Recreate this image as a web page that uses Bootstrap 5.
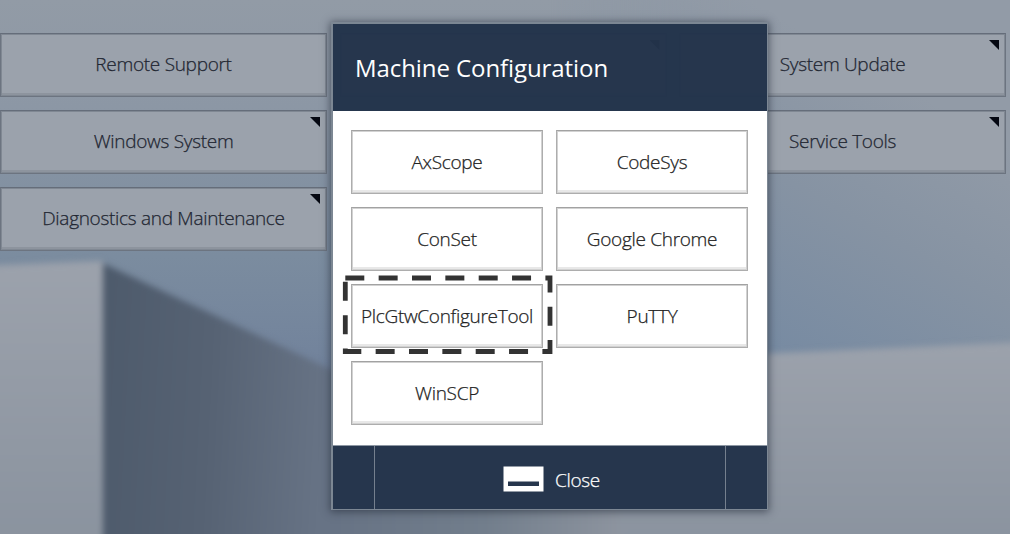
<!DOCTYPE html>
<html lang="en">
<head>
<meta charset="utf-8">
<meta name="viewport" content="width=device-width, initial-scale=1">
<title>Machine Configuration</title>
<link href="https://cdn.jsdelivr.net/npm/bootstrap@5.3.0/dist/css/bootstrap.min.css" rel="stylesheet">
<style>
body{font-family:"Open Sans","Noto Sans",sans-serif;background:#8b98a6;height:534px;width:1010px}
.backdrop-art{inset:0;width:1010px;height:534px}
.page-grid{display:grid;grid-template-columns:327px 327px 327px;grid-auto-rows:64px;gap:13px 12.5px;padding-top:33px}
.tile,.tool{border-radius:0;padding:0;height:64px;font-size:19px;line-height:28px;font-weight:300;-webkit-text-stroke:.25px;letter-spacing:-.3px;white-space:nowrap;display:flex;align-items:center;justify-content:center}
.tile{background:#9ba2ac;border:1px solid #6c7480;border-top-color:#656d7a;box-shadow:inset 0 0 0 1px #808893,inset 0 -3px #8d949e;color:#1f2632;position:relative;padding-bottom:2px}
.corner::after{content:"";position:absolute;right:6px;top:6px;width:10px;height:10px;background:#050812;clip-path:polygon(0 0,100% 0,100% 100%)}
.dialog-box{left:331px;top:22px;width:437px;height:488px;border:2px solid #7c8793;border-right-width:1px;box-shadow:0 1px 8px 1px rgba(40,48,62,.65)}
.dialog-head{height:87px;background:rgba(35,51,75,.975);color:#fff;font-size:24px;font-weight:400;padding:0 0 0 22px;letter-spacing:-.08px}
.dialog-main{height:334px;padding:19px 18px 0 17.5px}
.tool-grid{display:grid;grid-template-columns:192px 192px;gap:13px 13px;margin-left:.5px}
.tool{background:#fff;border:1px solid #adadad;border-top-color:#a2a2a2;box-shadow:inset 0 0 0 1px #d2d2d2,inset 0 -3px #e8e8e8;color:#222;position:relative}
.dashes{left:-11px;top:-12.5px;width:214px;height:84px}
.dialog-foot{height:64px;background:#26364d;border-top:1px solid #8d97a3;display:grid;grid-template-columns:41px 352px 1fr}
.close-btn{border:solid #75808e;border-width:0 1px;color:#fff;font-size:19px;font-weight:300;-webkit-text-stroke:.25px;padding:5px 0 0 3px;background:none;letter-spacing:-.3px}
.close-btn svg{margin-bottom:3px}
</style>
</head>
<body class="position-relative overflow-hidden m-0">
<svg class="backdrop-art position-absolute" viewBox="0 0 1010 534" preserveAspectRatio="none" aria-hidden="true">
  <defs>
    <linearGradient id="sky" x1="0" y1="0" x2="0" y2="1"><stop offset="0" stop-color="#929ba6"/><stop offset=".2" stop-color="#8c97a5"/><stop offset=".48" stop-color="#7b8c9f"/><stop offset=".72" stop-color="#70819b"/></linearGradient>
    <linearGradient id="skyr" gradientUnits="userSpaceOnUse" x1="760" y1="360" x2="910" y2="90"><stop offset="0" stop-color="#768aa2"/><stop offset=".55" stop-color="#8693a3"/><stop offset="1" stop-color="#929ba7"/></linearGradient>
    <linearGradient id="fade" gradientUnits="userSpaceOnUse" x1="550" y1="0" x2="760" y2="0"><stop offset="0" stop-color="#000"/><stop offset="1" stop-color="#fff"/></linearGradient>
    <mask id="blend"><rect x="550" width="460" height="400" fill="url(#fade)"/></mask>
    <linearGradient id="wall" x1="0" y1="0" x2="0" y2="1"><stop offset="0" stop-color="#9ca2ac"/><stop offset="1" stop-color="#89929e"/></linearGradient>
    <linearGradient id="shade" gradientUnits="userSpaceOnUse" x1="110" y1="0" x2="345" y2="12"><stop offset="0" stop-color="#4d5a6b"/><stop offset=".5" stop-color="#566273"/><stop offset="1" stop-color="#677385"/></linearGradient>
    <linearGradient id="base" gradientUnits="userSpaceOnUse" x1="320" y1="0" x2="620" y2="0"><stop offset="0" stop-color="#667284"/><stop offset=".55" stop-color="#727e8c"/><stop offset="1" stop-color="#8d949f"/></linearGradient>
    <filter id="soft" x="-10%" y="-10%" width="120%" height="120%" color-interpolation-filters="sRGB"><feGaussianBlur stdDeviation="3"/></filter>
  </defs>
  <rect width="1010" height="534" fill="url(#sky)"/>
  <rect x="550" width="460" height="400" fill="url(#skyr)" mask="url(#blend)"/>
  <g filter="url(#soft)">
    <path d="M98 261L345 376V560H98Z" fill="url(#shade)"/>
    <path d="M-20 266L103 261V560H-20Z" fill="url(#wall)"/>
    <path d="M600 361L1030 342V560H600Z" fill="url(#wall)"/>
    <path d="M335 400H620V560H335Z" fill="url(#base)"/>
  </g>
</svg>

<main class="page-grid position-relative">
  <button class="btn tile">Remote Support</button>
  <button class="btn tile corner" aria-label="Menu"></button>
  <button class="btn tile corner">System Update</button>
  <button class="btn tile corner">Windows System</button>
  <span></span>
  <button class="btn tile corner">Service Tools</button>
  <button class="btn tile corner">Diagnostics and Maintenance</button>
</main>

<section class="dialog-box position-absolute" role="dialog" aria-labelledby="dlg">
  <header id="dlg" class="dialog-head d-flex align-items-center">Machine Configuration</header>
  <div class="dialog-main bg-white">
    <div class="tool-grid">
      <button class="btn tool">AxScope</button>
      <button class="btn tool">CodeSys</button>
      <button class="btn tool">ConSet</button>
      <button class="btn tool">Google Chrome</button>
      <button class="btn tool">PlcGtwConfigureTool
        <svg class="dashes position-absolute" viewBox="341 273 214 84" aria-hidden="true"><path d="M345.3 278H550V351.5H345.3Z" fill="none" stroke="#333" stroke-width="4.8" stroke-dasharray="19 14.35"/></svg>
      </button>
      <button class="btn tool">PuTTY</button>
      <button class="btn tool">WinSCP</button>
    </div>
  </div>
  <footer class="dialog-foot">
    <span></span>
    <button class="close-btn d-flex align-items-center justify-content-center gap-2">
      <svg width="44" height="26" viewBox="0 0 44 26" aria-hidden="true"><rect x=".5" y=".5" width="40" height="25" fill="#fff"/><rect x="5" y="15.5" width="31" height="4.5" fill="#26364d"/></svg>
      <span>Close</span>
    </button>
    <span></span>
  </footer>
</section>
<script src="https://cdn.jsdelivr.net/npm/bootstrap@5.3.0/dist/js/bootstrap.bundle.min.js"></script>
</body>
</html>
